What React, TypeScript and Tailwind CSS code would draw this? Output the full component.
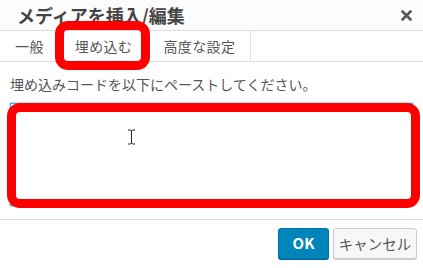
import React from 'react';

const tabs = ['一般', '埋め込む', '高度な設定'];

export default function App() {
    return (
        <div className="relative w-[423px] h-[268px] bg-white overflow-hidden font-['Noto_Sans_CJK_JP',sans-serif] text-[#555]">
            {/* Header */}
            <div className="flex items-center justify-between h-[31px] pl-[17px] pr-[10px] bg-[#fcfcfc] border-b border-[#ddd]">
                <h1 className="text-[18px] font-bold text-[#444] leading-none">メディアを挿入/編集</h1>
                <svg width="11" height="11" viewBox="0 0 11 11" className="mr-[1px]">
                    <path d="M1.5 1.5 L9.5 9.5 M9.5 1.5 L1.5 9.5" stroke="#555" strokeWidth="2.6" strokeLinecap="round" />
                </svg>
            </div>

            {/* Tabs */}
            <div className="flex h-[31px] border-b border-[#ddd]">
                {tabs.map((tab, i) => (
                    <div
                        key={i}
                        className={`flex items-center px-[15px] text-[14px] tracking-[0.4px] border-r border-[#ddd] ${i === 1 ? 'bg-white' : ''}`}
                    >
                        {tab}
                    </div>
                ))}
            </div>

            {/* Content */}
            <div className="px-[10px] pt-[12px]">
                <p className="text-[14px] leading-[20px] text-[#555]">埋め込みコードを以下にペーストしてください。</p>
                <div className="relative mt-[9px] h-[103px] border border-[#5b9dd9] shadow-[0_0_2px_rgba(30,140,190,0.8)] bg-white">
                    {/* I-beam cursor */}
                    <svg width="9" height="16" viewBox="0 0 9 16" className="absolute left-[116px] top-[25px]">
                        <path d="M1 1 H3.5 L4.5 2 L5.5 1 H8 M4.5 2 V14 M1 15 H3.5 L4.5 14 L5.5 15 H8" stroke="#222" strokeWidth="1" fill="none" />
                    </svg>
                </div>
            </div>

            {/* Footer */}
            <div className="absolute left-0 right-0 bottom-0 h-[49px] border-t border-[#ddd] flex items-center justify-end gap-[4px] pr-[6px] pb-[1px]">
                <button className="h-[31px] w-[51px] rounded-[3px] bg-[#0085ba] border border-[#0073aa] text-white text-[15px] font-semibold shadow-[0_1px_0_#006799]">
                    OK
                </button>
                <button className="h-[31px] w-[84px] rounded-[3px] bg-[#f7f7f7] border border-[#ccc] text-[#555] text-[14.5px] shadow-[0_1px_0_#ccc]">
                    キャンセル
                </button>
            </div>

            {/* Red annotation boxes */}
            <div className="absolute left-[55px] top-[21px] w-[95px] h-[49px] border-[9px] border-[#ff0000] rounded-[13px] pointer-events-none" />
            <div className="absolute left-[7px] top-[103px] w-[413px] h-[105px] border-[9px] border-[#ff0000] rounded-[13px] pointer-events-none" />
        </div>
    );
}
